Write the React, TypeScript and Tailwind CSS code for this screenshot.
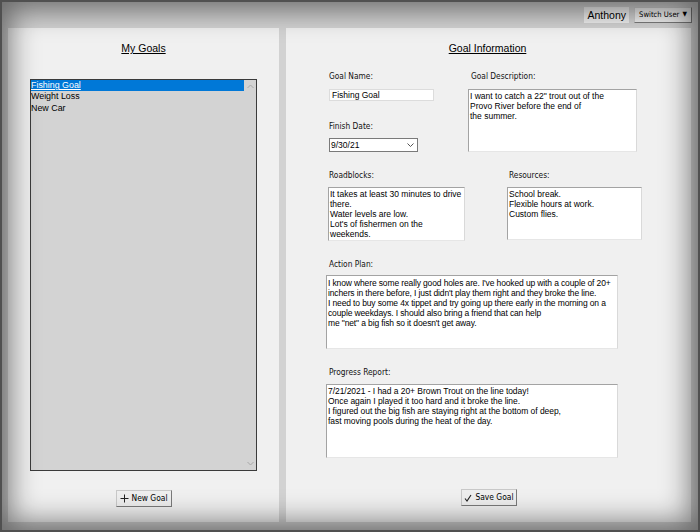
import React from "react";

const arial = "font-['Liberation_Sans',Arial,sans-serif]";
const tahoma = "font-['DejaVu_Sans_Condensed','DejaVu_Sans',sans-serif] font-stretch-condensed";

function Label({ children, className = "" }: { children: React.ReactNode; className?: string }) {
  return <div className={`${tahoma} text-[8.3px] leading-[10px] text-[#111] ${className}`}>{children}</div>;
}

function Box({ text, className = "" }: { text: string; className?: string }) {
  return (
    <div
      className={`${arial} bg-white border border-t-[#a3a3a3] border-l-[#a3a3a3] border-r-[#d9d9d9] border-b-[#e6e6e6] text-[8.5px] leading-[10px] text-black whitespace-pre overflow-hidden pl-[1px] pt-[1px] ${className}`}
    >
      {text}
    </div>
  );
}

function Btn({ icon, label }: { icon: React.ReactNode; label: string }) {
  return (
    <div
      className={`${tahoma} w-[56px] h-[17px] flex items-center justify-center gap-[3px] bg-[#efefef] border border-[#c9c9c9] border-r-[#7a7a7a] border-b-[#7a7a7a] text-[8.4px] text-black`}
    >
      {icon}
      <span>{label}</span>
    </div>
  );
}

export default function App() {
  const items = ["Fishing Goal", "Weight Loss", "New Car"];
  return (
    <div className="relative w-[700px] h-[532px] bg-[#d2d2d2] flex flex-col overflow-hidden">
      {/* top bar */}
      <div className="h-[28px] flex items-center justify-end pr-[8px] gap-[5px] pt-[2px]">
        <div className={`${arial} bg-[#efefef] text-[10.5px] leading-[16px] px-[3px] text-black`}>Anthony</div>
        <div
          className={`${tahoma} h-[16px] w-[58px] flex items-center justify-center gap-[3px] bg-[#efefef] border border-[#cfcfcf] border-r-[#7a7a7a] border-b-[#7a7a7a] text-[7.6px] text-black whitespace-nowrap`}
        >
          <span>Switch User</span>
          <span className="text-[6.5px]">▼</span>
        </div>
      </div>

      {/* main */}
      <div className="flex-1 flex gap-[7px] pl-[8px] pr-[9px] pb-[10px]">
        {/* left panel */}
        <div className="w-[271px] bg-[#f0f0f0] flex flex-col items-center pt-[14px]">
          <div className={`${arial} text-[10.5px] leading-[12px] underline text-black`}>My Goals</div>
          <div className="mt-[25px] w-[227px] h-[392px] border border-[#3a3a3a] bg-[#d3d3d3] flex">
            <div className="flex-1 flex flex-col">
              {items.map((it, i) => (
                <div
                  key={it}
                  className={`${arial} text-[8.9px] leading-[11.4px] ${
                    i === 0 ? "bg-[#0078d7] text-white underline" : "text-black"
                  }`}
                >
                  {it}
                </div>
              ))}
            </div>
            <div className="w-[12px] flex flex-col justify-between items-center py-[4px]">
              <svg width="7" height="5" viewBox="0 0 7 5">
                <path d="M0.5 4 L3.5 1 L6.5 4" fill="none" stroke="#a8a8a8" strokeWidth="1" />
              </svg>
              <svg width="7" height="5" viewBox="0 0 7 5">
                <path d="M0.5 1 L3.5 4 L6.5 1" fill="none" stroke="#a8a8a8" strokeWidth="1" />
              </svg>
            </div>
          </div>
          <div className="mt-[19px]">
            <Btn
              icon={
                <svg width="9" height="9" viewBox="0 0 9 9">
                  <path d="M4.5 0.5 V8.5 M0.5 4.5 H8.5" stroke="#222" strokeWidth="1" />
                </svg>
              }
              label="New Goal"
            />
          </div>
        </div>

        {/* right panel */}
        <div className="flex-1 bg-[#f0f0f0] flex flex-col pt-[14px]">
          <div className={`${arial} text-[10.5px] leading-[12px] underline text-black self-center -translate-x-[1px]`}>
            Goal Information
          </div>

          {/* row 1 */}
          <div className="flex mt-[17px] pl-[43px]">
            <div className="w-[139px] flex flex-col">
              <Label>Goal Name:</Label>
              <div
                className={`${arial} mt-[8px] w-[105px] h-[12px] bg-white border border-[#dcdcdc] text-[8.5px] leading-[10px] pl-[2px] text-black`}
              >
                Fishing Goal
              </div>
              <Label className="mt-[20px]">Finish Date:</Label>
              <div
                className={`${arial} mt-[7px] w-[89px] h-[14px] bg-white border border-[#7a7a7a] text-[8.5px] leading-[12px] pl-[1px] text-black flex items-center justify-between pr-[3px]`}
              >
                <span>9/30/21</span>
                <svg width="7" height="4" viewBox="0 0 7 4">
                  <path d="M0.5 0.5 L3.5 3.5 L6.5 0.5" fill="none" stroke="#555" strokeWidth="1" />
                </svg>
              </div>
            </div>
            <div className="flex flex-col">
              <Label className="pl-[3px]">Goal Description:</Label>
              <Box
                className="mt-[8px] w-[169px] h-[63px] pt-[1.5px]"
                text={"I want to catch a 22\" trout out of the\nProvo River before the end of\nthe summer."}
              />
            </div>
          </div>

          {/* row 2 */}
          <div className="flex mt-[18px] pl-[42px]">
            <div className="w-[179px] flex flex-col">
              <Label className="pl-[1px]">Roadblocks:</Label>
              <Box
                className="mt-[7px] w-[137px] h-[54px]"
                text={"It takes at least 30 minutes to drive\nthere.\nWater levels are low.\nLot's of fishermen on the\nweekends."}
              />
            </div>
            <div className="flex flex-col">
              <Label className="pl-[2px]">Resources:</Label>
              <Box
                className="mt-[7px] w-[135px] h-[53px]"
                text={"School break.\nFlexible hours at work.\nCustom flies."}
              />
            </div>
          </div>

          {/* row 3 */}
          <div className="flex flex-col mt-[18px] pl-[40px]">
            <Label className="pl-[3px]">Action Plan:</Label>
            <Box
              className="mt-[6px] w-[292px] h-[74px] pt-[2px] tracking-[-0.13px]"
              text={
                "I know where some really good holes are. I've hooked up with a couple of 20+\ninchers in there before, I just didn't play them right and they broke the line.\nI need to buy some 4x tippet and try going up there early in the morning on a\ncouple weekdays. I should also bring a friend that can help\nme \"net\" a big fish so it doesn't get away."
              }
            />
          </div>

          {/* row 4 */}
          <div className="flex flex-col mt-[18px] pl-[40px]">
            <Label className="pl-[3px]">Progress Report:</Label>
            <Box
              className="mt-[7px] w-[292px] h-[74px] pt-[1px] tracking-[-0.05px]"
              text={
                "7/21/2021 - I had a 20+ Brown Trout on the line today!\nOnce again I played it too hard and it broke the line.\nI figured out the big fish are staying right at the bottom of deep,\nfast moving pools during the heat of the day."
              }
            />
          </div>

          <div className="mt-[31px] pl-[175px]">
            <Btn
              icon={
                <svg width="8" height="8" viewBox="0 0 8 8">
                  <path d="M1 4.5 L3 7 L7 1" fill="none" stroke="#222" strokeWidth="1.1" />
                </svg>
              }
              label="Save Goal"
            />
          </div>
        </div>
      </div>

      {/* vignette overlay */}
      <div className="pointer-events-none absolute inset-0 border-[2px] border-[#505050] shadow-[inset_0_0_28px_8px_rgba(0,0,0,0.5)]" />
    </div>
  );
}
